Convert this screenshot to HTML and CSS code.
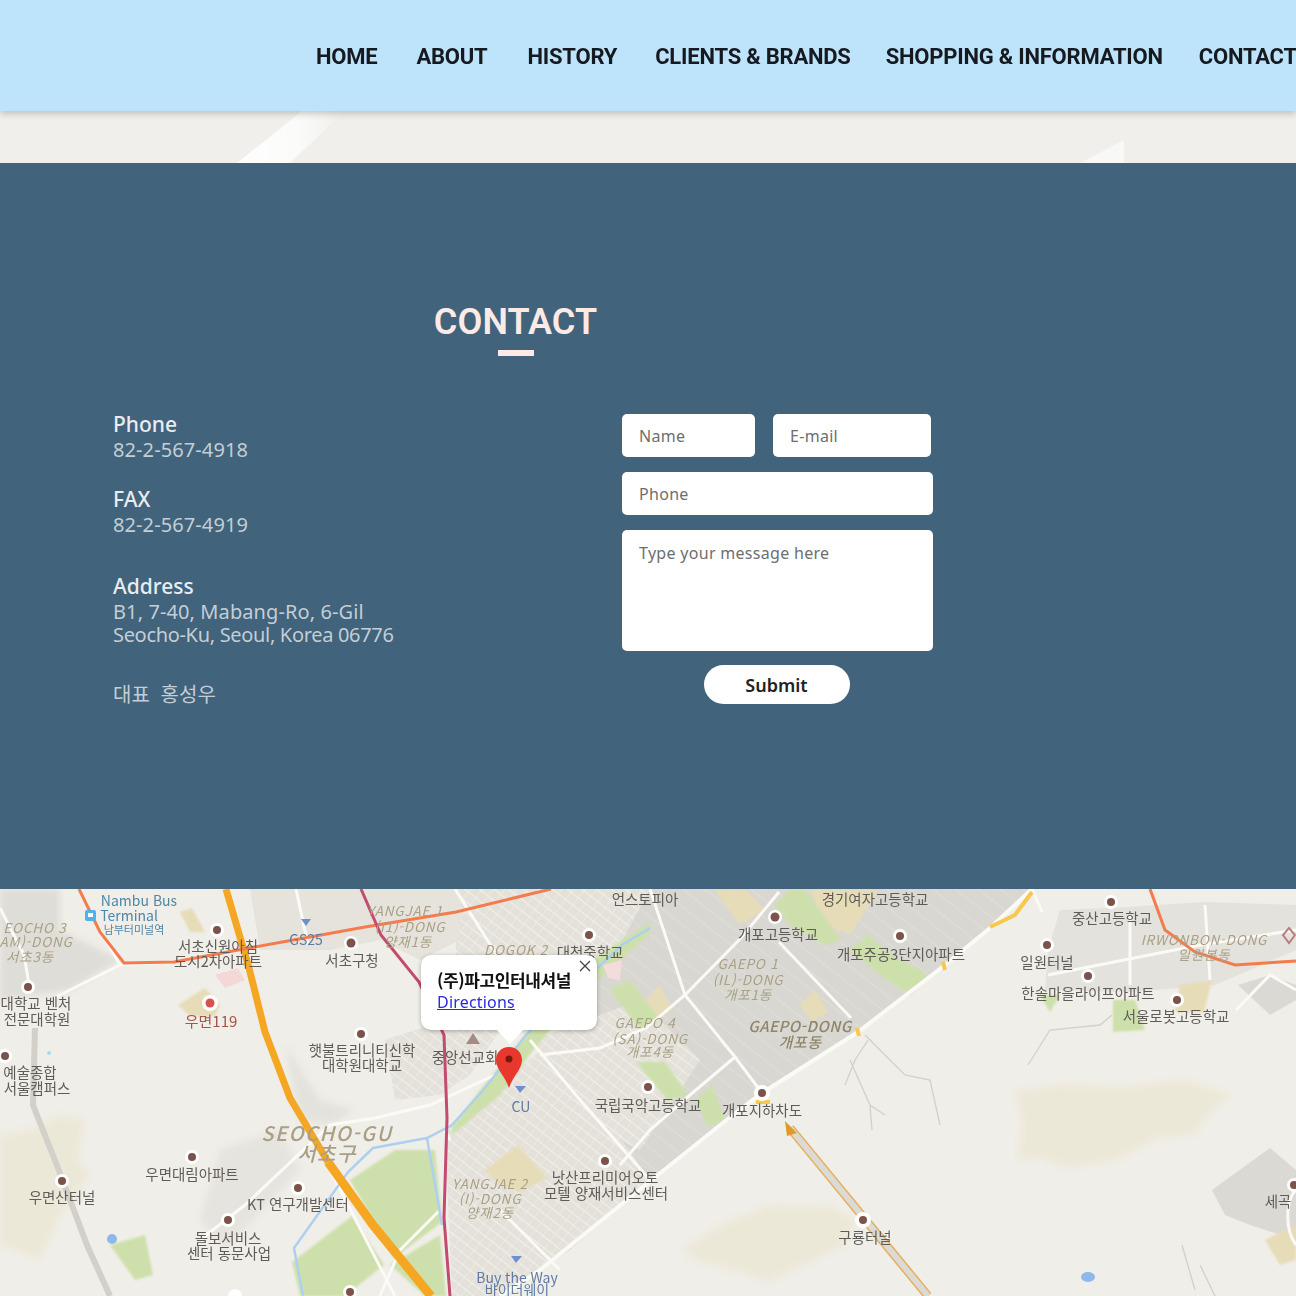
FILE: index.html
```html
<!DOCTYPE html>
<html lang="ko">
<head>
<meta charset="utf-8">
<title>Contact</title>
<link rel="stylesheet" href="styles.css">
</head>
<body>
<div class="page">
  <header class="topbar">
    <nav class="nav">
      <a class="nav-link" href="#">HOME</a>
      <a class="nav-link nav-about" href="#">ABOUT</a>
      <a class="nav-link nav-history" href="#">HISTORY</a>
      <a class="nav-link nav-clients" href="#">CLIENTS &amp; BRANDS</a>
      <a class="nav-link nav-shopping" href="#">SHOPPING &amp; INFORMATION</a>
      <a class="nav-link nav-contact" href="#">CONTACT</a>
    </nav>
  </header>

  <div class="band">
    <svg class="band-art" viewBox="0 0 1296 52" preserveAspectRatio="none" aria-hidden="true">
      <defs>
        <linearGradient id="streak" x1="0" x2="1" y1="0" y2="0">
          <stop offset="0" stop-color="#ffffff" stop-opacity=".95"/>
          <stop offset=".55" stop-color="#ffffff" stop-opacity=".75"/>
          <stop offset="1" stop-color="#ffffff" stop-opacity="0"/>
        </linearGradient>
      </defs>
      <polygon points="302,0 345,0 290,52 237,52" fill="url(#streak)"/>
      <polygon points="1124,29 1124,52 1080,52" fill="#f8f8f6"/>
    </svg>
  </div>

  <section class="contact">
    <div class="contact-head">
      <h1 class="contact-title">CONTACT</h1>
      <span class="contact-rule"></span>
    </div>
    <div class="contact-body">
      <div class="info">
        <div class="info-block info-phone">
          <h2 class="info-label">Phone</h2>
          <p class="info-text">82-2-567-4918</p>
        </div>
        <div class="info-block info-fax">
          <h2 class="info-label">FAX</h2>
          <p class="info-text">82-2-567-4919</p>
        </div>
        <div class="info-block info-address">
          <h2 class="info-label">Address</h2>
          <p class="info-text">B1, 7-40, Mabang-Ro, 6-Gil<br><span class="info-tight">Seocho-Ku, Seoul, Korea 06776</span></p>
        </div>
        <p class="info-text info-ceo">대표&nbsp; 홍성우</p>
      </div>
      <form class="form">
        <div class="form-row">
          <input class="field field-name" type="text" placeholder="Name">
          <input class="field field-email" type="text" placeholder="E-mail">
        </div>
        <input class="field" type="text" placeholder="Phone">
        <textarea class="field field-message" placeholder="Type your message here"></textarea>
        <button class="submit" type="button">Submit</button>
      </form>
    </div>
  </section>

  <section class="map">
    <svg class="map-art" viewBox="0 889 1296 407" aria-hidden="false">
      <defs>
        <pattern id="hatch" width="9" height="9" patternUnits="userSpaceOnUse" patternTransform="rotate(38)">
          <rect width="9" height="9" fill="#e4e1da"/>
          <line x1="0" y1="0" x2="9" y2="0" stroke="#f2f0ea" stroke-width="2"/>
          <line x1="0" y1="0" x2="0" y2="9" stroke="#f2f0ea" stroke-width="1"/>
        </pattern>
        <pattern id="block" width="14" height="14" patternUnits="userSpaceOnUse" patternTransform="rotate(38)">
          <rect width="14" height="14" fill="#d9d7d1"/>
          <line x1="0" y1="0" x2="14" y2="0" stroke="#e3e1db" stroke-width="1.5"/>
        </pattern>
      </defs>

      <rect x="0" y="889" width="1296" height="407" fill="#f0eee8"/>

      <!-- hills -->
      <path class="hill" d="M1015,1092 L1060,1084 L1120,1087 L1185,1080 L1232,1095 L1210,1112 L1195,1135 L1160,1138 L1115,1160 L1070,1168 L1040,1158 L1018,1160 L1022,1120Z"/>
      <path class="hill" d="M681,1250 L720,1225 L770,1205 L830,1207 L857,1220 L845,1245 L810,1262 L770,1282 L740,1272 L700,1262Z"/>
      <path class="hill" d="M0,1135 L30,1130 L60,1115 L85,1120 L78,1160 L90,1175 L60,1215 L40,1260 L0,1245Z"/>

      <!-- urban blocks -->
      <path fill="url(#block)" d="M640,889 L1032,889 L990,928 L945,965 L858,1032 L762,1093 L650,1180 L600,1130 L540,1060 L610,960Z"/>
      <path fill="url(#hatch)" d="M445,1130 L500,1085 L540,1050 L600,1110 L650,1180 L570,1250 L500,1296 L452,1296Z"/>
      <path fill="url(#hatch)" d="M530,1040 L560,1030 L640,1000 L700,1060 L640,1150 L600,1130Z"/>
      <path fill="url(#hatch)" d="M385,1040 L430,1025 L500,1030 L470,1075 L440,1095 L395,1100Z"/>
      <path fill="url(#hatch)" d="M456,889 L650,889 L620,945 L570,985 L500,1000 L456,960Z"/>
      <path class="soft-block" fill="#dfddd7" d="M0,889 L60,889 L60,930 L120,960 L70,990 L0,1000Z"/>
      <path fill="#e6e3dc" d="M250,889 L460,889 L460,940 L420,960 L380,940 L330,950 L260,950Z"/>
      <path fill="#e4e2dc" d="M1060,910 L1110,908 L1205,902 L1296,905 L1296,950 L1215,985 L1130,992 L1045,990 L1048,950Z"/>
      <path fill="#dbd9d3" d="M1238,985 L1270,975 L1296,985 L1296,1000 L1270,1015Z"/>
      <path fill="#dbd9d3" d="M1212,1190 L1270,1148 L1296,1170 L1296,1240 L1250,1225 L1225,1215Z"/>
      <path class="soft-block" fill="#e6e4de" d="M220,1150 L280,1130 L300,1170 L225,1250 L200,1220Z"/>
      <path class="soft-block" fill="#e4e2dc" d="M285,1045 L320,1100 L355,1110 L330,1125 L300,1120Z"/>

      <!-- beige compounds and parks -->
      <path class="tan" d="M810,890 L878,890 L850,935 L825,925Z"/>
      <path class="tan" d="M715,890 L745,890 L765,910 L740,925Z"/>
      <path class="tan" d="M180,912 L192,908 L205,932 L190,932Z"/>
      <path class="tan" d="M178,1005 L205,988 L220,1005 L215,1016 L190,1016Z"/>
      <path class="tan" d="M485,1170 L518,1145 L547,1178 L520,1192 L500,1185Z"/>
      <path class="tan" d="M646,1000 L660,985 L672,1010 L655,1020Z"/>
      <path class="tan" d="M800,1005 L815,990 L828,1012 L812,1022Z"/>
      <path class="tan" d="M1180,985 L1212,980 L1204,1012 L1175,1012Z"/>
      <path class="tan" d="M1265,1240 L1296,1225 L1296,1260 L1280,1265Z"/>

      <path class="park" d="M775,905 L790,890 L805,890 L841,940 L825,945 L790,925Z"/>
      <path class="park" d="M849,950 L868,935 L892,955 L928,975 L910,995 L880,975Z"/>
      <path class="park" d="M696,1100 L712,1085 L725,1120 L708,1127Z"/>
      <path class="park" d="M610,990 L630,980 L660,1020 L640,1030Z"/>
      <path class="park" d="M636,1062 L665,1062 L688,1095 L668,1100 L655,1085Z"/>
      <path class="park" d="M1113,1000 L1135,1000 L1145,1030 L1113,1032Z"/>
      <path class="park" d="M1040,995 L1060,995 L1050,1012Z"/>
      <path class="park" d="M110,1245 L145,1235 L153,1275 L135,1280Z"/>
      <path class="park" d="M650,922 L650,934 L575,1000 L535,1048 L500,1095 L452,1135 L452,1128 L480,1090 L525,1035 L585,965Z"/>
      <path class="park" d="M350,1180 L395,1150 L435,1150 L442,1222 L394,1258 L372,1218Z"/>
      <path class="park" d="M300,1296 L292,1262 L352,1216 L384,1265 L345,1296Z"/>
      <path class="park" d="M390,1265 L440,1235 L446,1296 L425,1296Z"/>
      <path fill="#f4d8d8" d="M215,975 L238,968 L245,980 L225,988Z"/>
      <path fill="#f2dcdc" d="M603,965 L622,960 L620,980 L608,978Z"/>

      <!-- white streets -->
      <g class="street">
        <path d="M0,908 L24,955 L30,990 M54,998 L120,965 L174,962 M120,965 L100,930"/>
        <path d="M296,889 L308,945 M455,889 L500,960"/>
        <path d="M650,889 L685,995 L735,1057 L762,1093"/>
        <path d="M779,892 L741,938 L685,995 L646,1028 L600,1048 L540,1055"/>
        <path d="M779,942 L851,1018"/>
        <path d="M735,1057 L690,1095 L650,1130 L620,1165"/>
        <path d="M530,1040 L580,1100 L650,1180"/>
        <path d="M495,1075 L430,1105 L375,1118 L330,1125 L245,1205 L200,1240"/>
        <path d="M330,1170 L395,1296 M440,1210 L400,1250 L380,1296"/>
        <path d="M445,1130 L450,1140 M500,1210 L560,1270"/>
        <path d="M1048,975 L1200,945 L1296,930 M1130,915 L1130,985 M1205,905 L1210,980"/>
        <path d="M1236,1010 L1270,975 L1296,990"/>
        <path d="M1296,1190 C1285,1200 1285,1230 1296,1245"/>
        <path d="M1032,889 L1042,912"/>
      </g>
      <path class="street-main" d="M1032,889 L990,928 L945,965 L858,1032 L762,1093 L729,1118 L654,1178 L540,1270 L500,1296"/>

      <!-- stream lines on the hillside -->
      <g class="trail">
        <path d="M865,1035 L890,1060 L905,1075 L930,1080 L940,1125"/>
        <path d="M868,1040 L855,1060 L845,1085 M850,1060 L870,1105 L885,1115 M870,1105 L872,1130"/>
        <path d="M1028,1065 L1050,1030 L1100,1025 L1112,1015"/>
        <path d="M1182,1245 L1195,1290 M1200,1265 L1215,1296"/>
      </g>

      <!-- expressway bits -->
      <path class="gray-road" d="M35,1028 L33,1105 L58,1168 L87,1245 L110,1296"/>
      <path d="M1032,892 L1015,915 L990,927" fill="none" stroke="#f8c84d" stroke-width="4"/>
      <path d="M943,962 L945,970 M857,1028 L859,1036 M756,1102 L770,1102" fill="none" stroke="#f8c84d" stroke-width="4"/>
      <path d="M790,1128 L928,1296" fill="none" stroke="#e7ae5b" stroke-width="9"/>
      <path d="M790,1128 L928,1296" fill="none" stroke="#dcdad4" stroke-width="6"/>
      <polygon points="785,1121 797,1133 787,1136" fill="#e29a26"/>

      <!-- water -->
      <path class="river" d="M650,928 L622,945 L526,1035 L485,1088 L452,1125 L427,1138 L373,1148 L348,1172 L294,1248 L303,1296"/>
      <path class="river" d="M427,1138 L442,1225"/>
      <ellipse cx="1088" cy="1277" rx="7" ry="5" fill="#8fb9ec"/>
      <ellipse cx="112" cy="1239" rx="5" ry="5" fill="#8fb9ec"/>
      <circle cx="49" cy="1053" r="2" fill="#a9daf3"/>

      <!-- trunk roads -->
      <path d="M226,889 L249,968 L265,1032 L290,1098 L328,1162" fill="none" stroke="#f5a623" stroke-width="7"/>
      <path d="M328,1162 L373,1225 L431,1296" fill="none" stroke="#f5a623" stroke-width="9"/>
      <path class="arterial" d="M79,889 L100,932 L124,963 L174,962 L249,948 L365,927 L456,912 L551,889"/>
      <path class="arterial" d="M1150,889 L1165,930 L1195,952 L1235,965 L1296,961"/>
      <path class="rail" d="M361,889 L381,935 L419,982 L444,1035 L447,1118 L444,1218 L450,1296"/>

      <!-- POI markers -->
      <g class="poi">
        <circle cx="217" cy="930" r="7"/><circle cx="351" cy="943" r="7"/><circle cx="28" cy="987" r="7"/>
        <circle cx="5" cy="1056" r="7"/><circle cx="361" cy="1034" r="7"/><circle cx="589" cy="935" r="7"/>
        <circle cx="775" cy="917" r="7"/><circle cx="900" cy="936" r="7"/><circle cx="1047" cy="945" r="7"/>
        <circle cx="1088" cy="976" r="7"/><circle cx="1177" cy="1000" r="7"/><circle cx="1111" cy="902" r="7"/>
        <circle cx="648" cy="1087" r="7"/><circle cx="762" cy="1093" r="8"/><circle cx="605" cy="1161" r="7"/>
        <circle cx="62" cy="1181" r="7"/><circle cx="192" cy="1157" r="7"/><circle cx="298" cy="1188" r="7"/>
        <circle cx="228" cy="1220" r="7"/><circle cx="863" cy="1220" r="8"/><circle cx="350" cy="1292" r="7"/>
        <circle cx="235" cy="1296" r="7"/><circle cx="1294" cy="1185" r="7"/>
      </g>
      <g class="poi-dot">
        <circle cx="217" cy="930" r="4"/><circle cx="351" cy="943" r="4.5"/><circle cx="28" cy="987" r="4"/>
        <circle cx="5" cy="1056" r="4"/><circle cx="361" cy="1034" r="4"/><circle cx="589" cy="935" r="4"/>
        <circle cx="775" cy="917" r="4.5"/><circle cx="900" cy="936" r="4"/><circle cx="1047" cy="945" r="4"/>
        <circle cx="1088" cy="976" r="4"/><circle cx="1177" cy="1000" r="4"/><circle cx="1111" cy="902" r="4"/>
        <circle cx="648" cy="1087" r="4"/><circle cx="762" cy="1093" r="4"/><circle cx="605" cy="1161" r="4"/>
        <circle cx="62" cy="1181" r="4"/><circle cx="192" cy="1157" r="4"/><circle cx="298" cy="1188" r="4"/>
        <circle cx="228" cy="1220" r="4"/><circle cx="863" cy="1220" r="4"/><circle cx="350" cy="1292" r="4"/>
        <circle cx="1294" cy="1185" r="4"/>
      </g>
      <circle cx="210" cy="1003" r="8" fill="#fff"/>
      <circle cx="210" cy="1003" r="4.5" fill="#d4524f"/>
      <polygon points="473,1033 480,1044 466,1044" fill="#a58b84"/>
      <path d="M1289,928 L1295,935 L1289,943 L1283,935Z" fill="none" stroke="#b78080" stroke-width="2"/>
      <rect x="85" y="910" width="11" height="11" rx="2" fill="#4fb2ec"/>
      <rect x="88" y="913" width="5" height="4" fill="#fff"/>
      <g fill="#6f8fd0">
        <polygon points="301,919 311,919 306,926"/>
        <polygon points="515,1086 526,1086 520,1093"/>
        <polygon points="511,1256 522,1256 516,1263"/>
      </g>

      <!-- labels -->
      <g class="lbl-transit">
        <text x="139" y="906">Nambu Bus</text>
        <text x="129" y="921">Terminal</text>
        <text x="134" y="934" class="lbl-small">남부터미널역</text>
      </g>
      <g class="lbl-district">
        <text x="35" y="933">EOCHO 3</text>
        <text x="36" y="947">AM)-DONG</text>
        <text x="30" y="962">서초3동</text>
        <text x="405" y="916">YANGJAE 1</text>
        <text x="410" y="932">(I1)-DONG</text>
        <text x="408" y="947">양재1동</text>
        <text x="516" y="955">DOGOK 2</text>
        <text x="748" y="969">GAEPO 1</text>
        <text x="748" y="985">(IL)-DONG</text>
        <text x="748" y="1000">개포1동</text>
        <text x="645" y="1028">GAEPO 4</text>
        <text x="650" y="1044">(SA)-DONG</text>
        <text x="650" y="1057">개포4동</text>
        <text x="1204" y="945">IRWONBON-DONG</text>
        <text x="1204" y="960">일원본동</text>
        <text x="490" y="1189">YANGJAE 2</text>
        <text x="490" y="1204">(I)-DONG</text>
        <text x="490" y="1218">양재2동</text>
      </g>
      <g class="lbl-area">
        <text x="800" y="1032">GAEPO-DONG</text>
        <text x="800" y="1048">개포동</text>
      </g>
      <g class="lbl-gu">
        <text x="327" y="1141">SEOCHO-GU</text>
        <text x="327" y="1161">서초구</text>
      </g>
      <g class="lbl-poi">
        <text x="218" y="952">서초신원아침</text>
        <text x="218" y="967">도시2차아파트</text>
        <text x="352" y="966">서초구청</text>
        <text x="590" y="958">대청중학교</text>
        <text x="645" y="905">언스토피아</text>
        <text x="875" y="905">경기여자고등학교</text>
        <text x="778" y="940">개포고등학교</text>
        <text x="901" y="960">개포주공3단지아파트</text>
        <text x="1112" y="924">중산고등학교</text>
        <text x="1047" y="968">일원터널</text>
        <text x="1088" y="999">한솔마을라이프아파트</text>
        <text x="1176" y="1022">서울로봇고등학교</text>
        <text x="1278" y="1207">세곡</text>
        <text x="762" y="1116">개포지하차도</text>
        <text x="648" y="1111">국립국악고등학교</text>
        <text x="865" y="1243">구룡터널</text>
        <text x="605" y="1183">낫산프리미어오토</text>
        <text x="606" y="1199">모텔 양재서비스센터</text>
        <text x="362" y="1056">햇불트리니티신학</text>
        <text x="362" y="1071">대학원대학교</text>
        <text x="465" y="1063">중앙선교회</text>
        <text x="36" y="1009">대학교 벤처</text>
        <text x="37" y="1025">전문대학원</text>
        <text x="30" y="1078">예술종합</text>
        <text x="37" y="1094">서울캠퍼스</text>
        <text x="192" y="1180">우면대림아파트</text>
        <text x="62" y="1203">우면산터널</text>
        <text x="298" y="1210">KT 연구개발센터</text>
        <text x="228" y="1244">돌보서비스</text>
        <text x="229" y="1259">센터 동문사업</text>
      </g>
      <text class="lbl-red" x="211" y="1027">우면119</text>
      <g class="lbl-shop">
        <text x="306" y="945">GS25</text>
        <text x="521" y="1112">CU</text>
        <text x="517" y="1283">Buy the Way</text>
        <text x="517" y="1295">바이더웨이</text>
      </g>

      <!-- pin -->
      <path d="M509,1047 C501,1047 496,1053 496,1060 C496,1069 505,1076 509,1088 C513,1076 522,1069 522,1060 C522,1053 517,1047 509,1047Z" fill="#e8372c"/>
      <circle cx="509" cy="1059" r="3.5" fill="#7c1710"/>
    </svg>

    <div class="popup">
      <button class="popup-close" type="button" aria-label="Close">
        <svg viewBox="0 0 12 12" width="12" height="12"><path d="M1,1 L11,11 M11,1 L1,11" stroke="#444" stroke-width="1.3" fill="none"/></svg>
      </button>
      <strong class="popup-title">(주)파고인터내셔널</strong>
      <a class="popup-link" href="#">Directions</a>
    </div>
  </section>
</div>
</body>
</html>
```

FILE: styles.css
```css
* { box-sizing: border-box; }

html, body {
  margin: 0;
  padding: 0;
  overflow: hidden;
}

body {
  width: 1296px;
  height: 1296px;
  background: #f0efeb;
  font-family: "Noto Sans", "Noto Sans CJK KR", sans-serif;
}

.page {
  width: 1296px;
  height: 1296px;
  overflow: hidden;
  display: flex;
  flex-direction: column;
  filter: blur(0.7px);
}

/* Header */
.topbar {
  position: relative;
  z-index: 2;
  flex: 0 0 111px;
  background: #bee4fb;
  box-shadow: 0 2px 7px rgba(60, 55, 45, .3);
  display: flex;
  align-items: center;
  padding-left: 316px;
  overflow: hidden;
}

.nav {
  display: flex;
  gap: 38px;
  white-space: nowrap;
  margin-top: 3px;
}

.nav-link {
  font-family: Roboto, sans-serif;
  font-weight: 700;
  font-size: 22px;
  line-height: 28px;
  letter-spacing: -0.22px;
  color: #16191f;
  text-decoration: none;
}

.nav-about { margin-left: 1px; }
.nav-history { margin-left: 2px; }
.nav-shopping { margin-left: -3px; }
.nav-contact { margin-left: -2px; }

/* Strip between header and section */
.band {
  flex: 0 0 52px;
  background: #f0efeb;
}

.band-art {
  display: block;
  width: 100%;
  height: 100%;
}

/* Contact */
.contact {
  flex: 0 0 726px;
  background: #41637b;
  padding-top: 136px;
}

.contact-head {
  width: 1031px;
  display: flex;
  flex-direction: column;
  align-items: center;
  gap: 5px;
}

.contact-title {
  margin: 0;
  font-family: Roboto, sans-serif;
  font-weight: 600;
  font-size: 36px;
  line-height: 46px;
  letter-spacing: .1px;
  color: #fdeae7;
}

.contact-rule {
  width: 36px;
  height: 6px;
  background: #fdeae7;
}

.contact-body {
  display: flex;
  padding-left: 113px;
  margin-top: 55px;
}

.info {
  flex: 0 0 509px;
}

.info-label {
  margin: 0;
  font-size: 21px;
  line-height: 26px;
  font-weight: 500;
  color: #e9edf0;
}

.info-text {
  margin: 1px 0 0;
  font-size: 20px;
  line-height: 23px;
  letter-spacing: .1px;
  color: #c3ced6;
}

.info-tight { letter-spacing: -0.32px; }

.info-fax { margin-top: 25px; }
.info-address { margin-top: 37px; }
.info-ceo { margin-top: 37px; }

.form {
  width: 311px;
  margin-top: 3px;
  display: flex;
  flex-direction: column;
  gap: 15px;
  align-items: center;
}

.form-row {
  display: flex;
  gap: 18px;
  width: 100%;
}

.field {
  display: block;
  width: 100%;
  height: 43px;
  border: 0;
  border-radius: 5px;
  background: #fff;
  padding: 0 17px;
  font-family: "Noto Sans", sans-serif;
  font-size: 16px;
  letter-spacing: .3px;
  color: #666;
  outline: none;
}

.field::placeholder {
  color: #6e6e6e;
  opacity: 1;
}

.field-name { flex: 0 0 133px; width: 133px; }
.field-email { flex: 0 0 158px; width: 158px; }

.field-message {
  height: 121px;
  padding-top: 12px;
  line-height: 22px;
  resize: none;
}

.submit {
  width: 146px;
  height: 39px;
  margin: -1px 2px 0 0;
  border: 0;
  border-radius: 20px;
  background: #fff;
  color: #222;
  font-family: "Noto Sans", sans-serif;
  font-weight: 600;
  font-size: 18px;
  padding: 0;
}

/* Map */
.map {
  position: relative;
  flex: 0 0 407px;
  overflow: hidden;
}

.map-art {
  display: block;
  width: 1296px;
  height: 407px;
  font-family: "Noto Sans CJK KR", "Noto Sans", sans-serif;
  filter: blur(0.5px);
}

.hill { fill: #ece8d8; filter: blur(3px); }
.tan { fill: #e6dcb8; filter: blur(1px); }
.park { fill: #cde0ab; filter: blur(.8px); }
.soft-block { filter: blur(3px); }
.street { fill: none; stroke: #fbfaf7; stroke-width: 3; }
.street-main { fill: none; stroke: #fbfaf7; stroke-width: 4; }
.gray-road { fill: none; stroke: #d3d0c9; stroke-width: 6; }
.river { fill: none; stroke: #aed0ee; stroke-width: 2.5; }
.arterial { fill: none; stroke: #f47c4c; stroke-width: 3; }
.rail { fill: none; stroke: #c34b6f; stroke-width: 3; }
.trail { fill: none; stroke: #d3d0c8; stroke-width: 1.3; }
.poi { fill: #fff; }
.poi-dot { fill: #7d5249; }

.map-art text { text-anchor: middle; }

.lbl-transit { fill: #4f86a6; font-size: 14px; }
.lbl-small { font-size: 11px; }
.lbl-district { fill: #a9a086; font-size: 13.5px; font-style: italic; letter-spacing: .8px; }
.lbl-area { fill: #8f866a; font-size: 15px; font-style: italic; font-weight: 500; letter-spacing: .5px; }
.lbl-gu { fill: #a89f84; font-size: 20px; font-style: italic; font-weight: 500; letter-spacing: 1.5px; }
.lbl-poi { fill: #5f5c57; font-size: 14.5px; }
.lbl-red { fill: #a5544c; font-size: 15px; }
.lbl-shop { fill: #5f7ba5; font-size: 14px; }

.popup {
  position: absolute;
  left: 421px;
  top: 66px;
  width: 176px;
  height: 75px;
  padding: 13px 16px;
  background: #fff;
  border-radius: 10px;
  box-shadow: 0 1px 4px rgba(0, 0, 0, .3);
  display: flex;
  flex-direction: column;
}

.popup::after {
  content: "";
  position: absolute;
  left: 76px;
  bottom: -14px;
  border-left: 13px solid transparent;
  border-right: 13px solid transparent;
  border-top: 14px solid #fff;
}

.popup-close {
  position: absolute;
  top: 5px;
  right: 6px;
  width: 12px;
  height: 12px;
  padding: 0;
  border: 0;
  background: none;
  display: block;
}

.popup-close svg { display: block; }

.popup-title {
  font-family: "Noto Sans CJK KR", sans-serif;
  font-size: 17px;
  line-height: 24px;
  font-weight: 700;
  letter-spacing: -0.4px;
  color: #111;
}

.popup-link {
  font-family: "Noto Sans", sans-serif;
  font-size: 16px;
  line-height: 20px;
  letter-spacing: .2px;
  color: #2a2ae0;
  width: max-content;
}
```
